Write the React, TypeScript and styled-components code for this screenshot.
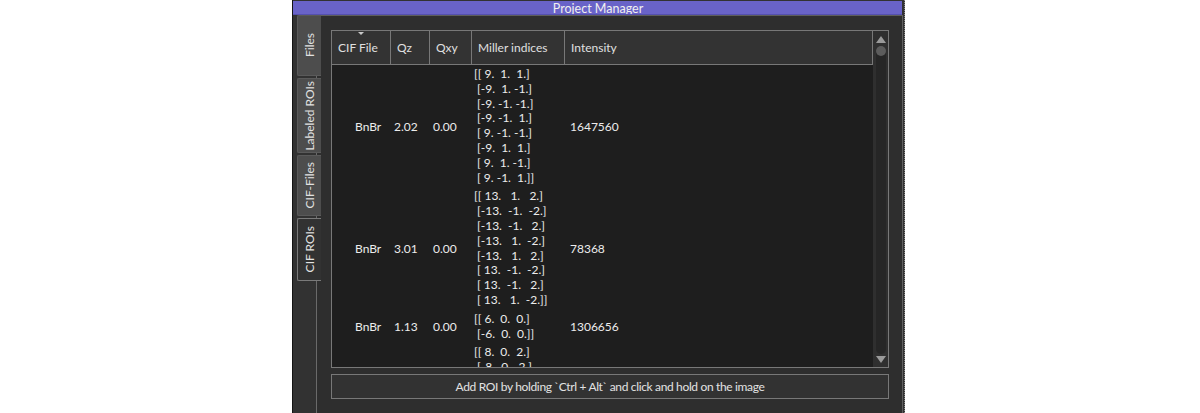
import React from "react";
import styled, { createGlobalStyle } from "styled-components";

const Global = createGlobalStyle`
  html, body { margin: 0; padding: 0; background: #ffffff; }
  body { font-family: Lato, "Noto Sans", sans-serif; font-size: 12px; }
  #root { width: 1200px; height: 413px; overflow: hidden; }
`;

const Page = styled.div`
  display: flex;
  height: 413px;
  padding-left: 292px;
`;

const Window = styled.div`
  width: 611px;
  height: 413px;
  display: flex;
  flex-direction: column;
  background: #323232;
  border-left: 1px solid #141414;
  border-right: 1px dotted #8c8c8c;
  overflow: hidden;
`;

const TitleBar = styled.div`
  height: 12px;
  margin: 1px 2px 0 0;
  padding-top: 1px;
  background: #6963c8;
  border-bottom: 1px solid #5450ad;
  color: #f0f0f0;
  text-align: center;
  font-size: 12.5px;
  line-height: 13px;
  overflow: hidden;
  white-space: nowrap;
`;

const TitleText = styled.span`
  padding-left: 1px;
`;

const Body = styled.div`
  flex: 1;
  display: flex;
  min-height: 0;
`;

const TabColumn = styled.div`
  flex: 0 0 23px;
  min-width: 0;
  box-sizing: border-box;
  padding-left: 4px;
  display: flex;
  flex-direction: column;
  gap: 2px;
`;

const Tab = styled.div<{ $h: number; $active?: boolean }>`
  position: relative;
  z-index: 1;
  flex-shrink: 0;
  width: 24px;
  height: ${(p) => p.$h}px;
  box-sizing: border-box;
  display: flex;
  align-items: center;
  justify-content: center;
  background: ${(p) => (p.$active ? "#323232" : "#4d4d4d")};
  border: 1px solid ${(p) => (p.$active ? "#7a7a7a" : "#5a5a5a")};
  border-right: none;
  border-radius: 2px 0 0 2px;
  color: #e2e2e2;
  font-size: 12px;
`;

const TabLabel = styled.span`
  writing-mode: vertical-rl;
  transform: rotate(180deg);
  white-space: nowrap;
  line-height: 14px;
`;

const Pane = styled.div`
  flex: 1;
  margin-right: 1px;
  background: #2e2e2e;
  border-top: 1px solid #5e5e5e;
  border-left: 1px solid #6a6a6a;
  border-right: 1px solid #5e5e5e;
  padding: 14px 13px 0 14px;
  display: flex;
  flex-direction: column;
  gap: 6px;
`;

const TableFrame = styled.div`
  height: 338px;
  flex-shrink: 0;
  box-sizing: border-box;
  border: 1px solid #787878;
  display: flex;
  background: #1e1e1e;
`;

const TableView = styled.div`
  flex: 1;
  display: flex;
  flex-direction: column;
  overflow: hidden;
`;

const cols = "59px 39px 42px 93px 1fr";

const HeaderRow = styled.div`
  display: grid;
  grid-template-columns: ${cols};
  height: 34px;
  flex-shrink: 0;
  background: #333333;
`;

const HeaderCell = styled.div`
  position: relative;
  box-sizing: border-box;
  border-right: 1px solid #787878;
  border-bottom: 1px solid #787878;
  padding-left: 6px;
  display: flex;
  align-items: center;
  color: #e0e0e0;
  font-size: 12px;
`;

const SortArrow = styled.span`
  position: absolute;
  top: 1px;
  left: 26px;
  width: 0;
  height: 0;
  border-left: 3px solid transparent;
  border-right: 3px solid transparent;
  border-top: 3px solid #c8c8c8;
`;

const Row = styled.div`
  display: grid;
  grid-template-columns: ${cols};
  padding: 2px 0;
  color: #ececec;
  font-size: 12px;
  flex-shrink: 0;
`;

const Cell = styled.div<{ $pad: number }>`
  display: flex;
  align-items: center;
  padding-left: ${(p) => p.$pad}px;
  white-space: nowrap;
`;

const Matrix = styled.div`
  padding-left: 2px;
  white-space: pre;
  line-height: 14.8px;
`;

const ScrollBar = styled.div`
  flex: 0 0 15px;
  background: #2f2f2f;
  display: flex;
  flex-direction: column;
  align-items: center;
  padding: 5px 0 4px;
  box-sizing: border-box;
`;

const Arrow = styled.span<{ $down?: boolean }>`
  width: 0;
  height: 0;
  border-left: 5px solid transparent;
  border-right: 5px solid transparent;
  ${(p) =>
    p.$down
      ? "border-top: 7px solid #9a9a9a;"
      : "border-bottom: 7px solid #9a9a9a;"}
`;

const Track = styled.div`
  flex: 1;
  width: 10px;
  margin: 3px 0 2px;
  border-radius: 5px;
  background: #262626;
  display: flex;
  flex-direction: column;
  align-items: center;
`;

const Handle = styled.div`
  width: 10px;
  height: 10px;
  border-radius: 50%;
  background: #5c5c5c;
`;

const ActionBar = styled.div`
  height: 25px;
  flex-shrink: 0;
  box-sizing: border-box;
  border: 1px solid #787878;
  background: #323232;
  color: #e2e2e2;
  font-size: 12px;
  letter-spacing: -0.35px;
  display: flex;
  align-items: center;
  justify-content: center;
`;

type Entry = { cif: string; qz: string; qxy: string; miller: string[]; intensity: string };

const rows: Entry[] = [
  {
    cif: "BnBr",
    qz: "2.02",
    qxy: "0.00",
    miller: [
      "[[ 9.  1.  1.]",
      " [-9.  1. -1.]",
      " [-9. -1. -1.]",
      " [-9. -1.  1.]",
      " [ 9. -1. -1.]",
      " [-9.  1.  1.]",
      " [ 9.  1. -1.]",
      " [ 9. -1.  1.]]",
    ],
    intensity: "1647560",
  },
  {
    cif: "BnBr",
    qz: "3.01",
    qxy: "0.00",
    miller: [
      "[[ 13.   1.   2.]",
      " [-13.  -1.  -2.]",
      " [-13.  -1.   2.]",
      " [-13.   1.  -2.]",
      " [-13.   1.   2.]",
      " [ 13.  -1.  -2.]",
      " [ 13.  -1.   2.]",
      " [ 13.   1.  -2.]]",
    ],
    intensity: "78368",
  },
  {
    cif: "BnBr",
    qz: "1.13",
    qxy: "0.00",
    miller: ["[[ 6.  0.  0.]", " [-6.  0.  0.]]"],
    intensity: "1306656",
  },
  {
    cif: "BnBr",
    qz: "2.24",
    qxy: "0.00",
    miller: [
      "[[ 8.  0.  2.]",
      " [-8.  0. -2.]",
      " [-8.  0.  2.]",
      " [ 8.  0. -2.]",
      " [ 2.  0.  8.]",
      " [-2.  0. -8.]",
      " [-2.  0.  8.]",
      " [ 2.  0. -8.]]",
    ],
    intensity: "412080",
  },
];

const tabs = [
  { label: "Files", h: 61 },
  { label: "Labeled ROIs", h: 75 },
  { label: "CIF-Files", h: 61 },
  { label: "CIF ROIs", h: 63, active: true },
];

export default function App() {
  return (
    <>
      <Global />
      <Page>
        <Window>
          <TitleBar>
            <TitleText>Project Manager</TitleText>
          </TitleBar>
          <Body>
            <TabColumn>
              {tabs.map((t) => (
                <Tab key={t.label} $h={t.h} $active={t.active}>
                  <TabLabel>{t.label}</TabLabel>
                </Tab>
              ))}
            </TabColumn>
            <Pane>
              <TableFrame>
                <TableView>
                  <HeaderRow>
                    <HeaderCell>
                      <SortArrow />
                      CIF File
                    </HeaderCell>
                    <HeaderCell>Qz</HeaderCell>
                    <HeaderCell>Qxy</HeaderCell>
                    <HeaderCell>Miller indices</HeaderCell>
                    <HeaderCell>Intensity</HeaderCell>
                  </HeaderRow>
                  {rows.map((r, i) => (
                    <Row key={i}>
                      <Cell $pad={23}>{r.cif}</Cell>
                      <Cell $pad={3}>{r.qz}</Cell>
                      <Cell $pad={3}>{r.qxy}</Cell>
                      <Matrix>{r.miller.join("\n")}</Matrix>
                      <Cell $pad={5}>{r.intensity}</Cell>
                    </Row>
                  ))}
                </TableView>
                <ScrollBar>
                  <Arrow />
                  <Track>
                    <Handle />
                  </Track>
                  <Arrow $down />
                </ScrollBar>
              </TableFrame>
              <ActionBar>Add ROI by holding `Ctrl + Alt` and click and hold on the image</ActionBar>
            </Pane>
          </Body>
        </Window>
      </Page>
    </>
  );
}
